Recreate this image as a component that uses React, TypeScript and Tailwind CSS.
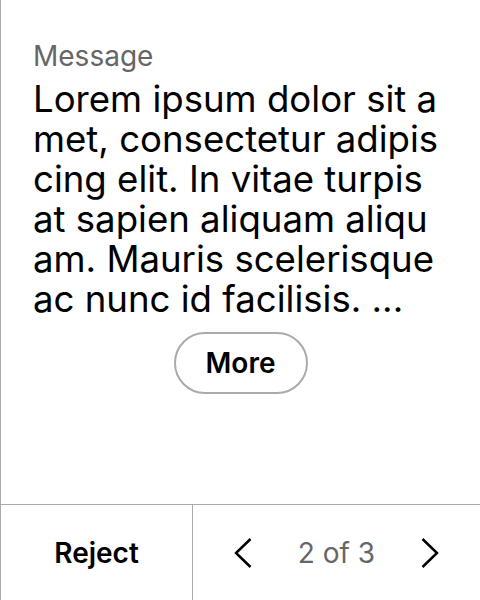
export default function App() {
  return (
    <div
      className="w-[480px] h-[600px] flex flex-col bg-white border-l border-[#aaaaaa] text-black"
      style={{ fontFamily: 'Inter, "Noto Sans", sans-serif' }}
    >
      <div className="flex-1 flex flex-col pl-[32px] pr-[35px] pt-[40px]">
        <div className="text-[28px] leading-[32px] text-[#666666]">Message</div>
        <p className="mt-[7px] text-[36.6px] leading-[40px] break-all">
          Lorem ipsum dolor sit amet, consectetur adipiscing elit. In vitae turpis at sapien aliquam aliquam. Mauris scelerisque ac nunc id facilisis. ...
        </p>
        <div className="flex justify-center mt-[13px] pl-[3px]">
          <button className="w-[134px] h-[62px] rounded-full border-2 border-[#aaaaaa] text-[28px] font-semibold">
            More
          </button>
        </div>
      </div>

      <div className="h-[96px] flex border-t border-[#aaaaaa]">
        <button className="w-[192px] flex items-center justify-center text-[28px] font-semibold border-r border-[#aaaaaa]">
          Reject
        </button>
        <div className="flex-1 flex items-center justify-center gap-[46px]">
          <svg width="18" height="32" viewBox="0 0 18 32" fill="none" stroke="currentColor" strokeWidth="2.5">
            <polyline points="16.5,2 2,16 16.5,30" />
          </svg>
          <span className="text-[28px] text-[#666666]">2 of 3</span>
          <svg width="18" height="32" viewBox="0 0 18 32" fill="none" stroke="currentColor" strokeWidth="2.5">
            <polyline points="1.5,2 16,16 1.5,30" />
          </svg>
        </div>
      </div>
    </div>
  );
}
